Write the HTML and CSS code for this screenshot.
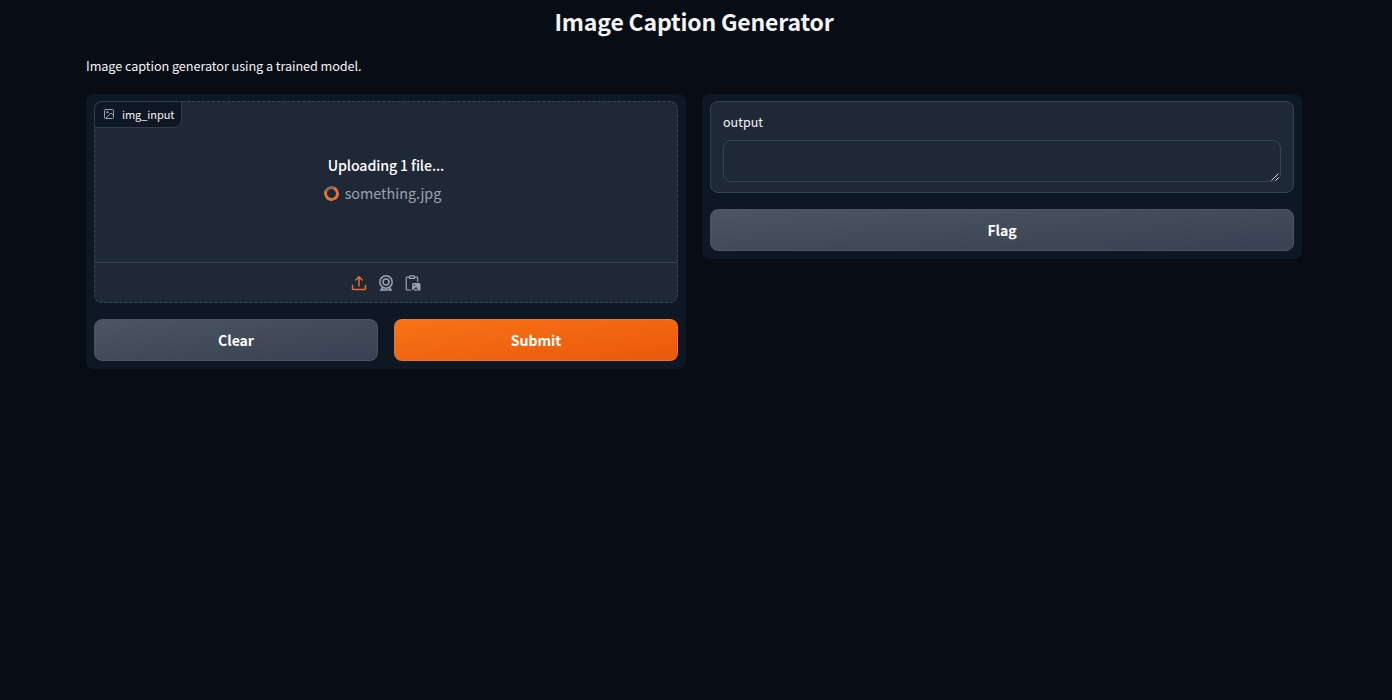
FILE: index.html
```html
<!DOCTYPE html>
<html lang="en">
<head>
<meta charset="utf-8">
<title>Image Caption Generator</title>
<link rel="stylesheet" href="styles.css">
</head>
<body>
<main class="app">
  <h1 class="title">Image Caption Generator</h1>
  <p class="description">Image caption generator using a trained model.</p>
  <div class="columns">
    <section class="panel">
      <div class="image-block">
        <div class="block-label">
          <svg class="label-icon" viewBox="0 0 24 24" fill="none" stroke="currentColor" stroke-width="2" stroke-linecap="round" stroke-linejoin="round"><rect x="3" y="3" width="18" height="18" rx="2"/><circle cx="8.5" cy="8.5" r="1.5"/><path d="M21 15l-5-5L5 21"/></svg>
          <span>img_input</span>
        </div>
        <div class="upload-status">
          <div class="uploading">Uploading 1 file...</div>
          <div class="file"><span class="loader"></span><span class="filename">something.jpg</span></div>
        </div>
        <div class="sources">
          <svg class="source active" viewBox="0 0 16 16" fill="none" stroke="currentColor" stroke-width="1.5" stroke-linecap="round" stroke-linejoin="round"><path d="M1.500 10.500v3.200c0 .5.3.8.8.8h11.400c.5 0 .8-.3.8-.8v-3.200M8 11V1.800M4.800 5 8 1.800 11.200 5"/></svg>
          <svg class="source" viewBox="0 0 16 16" fill="none" stroke="currentColor" stroke-width="1.5" stroke-linecap="round"><circle cx="8" cy="7" r="6.200"/><circle cx="8" cy="7" r="3"/><path d="M4.500 12.800 3 14.900h10l-1.500-2.100"/></svg>
          <svg class="source" viewBox="0 0 16 16" fill="none" stroke="currentColor" stroke-width="1.2" stroke-linejoin="round"><path d="M4.500 2.200H2.100c-.5 0-.9.4-.9.9v11c0 .5.4.9.9.9h4M9.500 2.200h2.200c.5 0 .9.4.9.9v4"/><path d="M4.500 1.600c0-.4.3-.8.8-.8h3.400c.5 0 .8.4.8.8v1.800h-5z"/><path fill="currentColor" stroke="none" fill-rule="evenodd" d="M8.400 8h5.800c.7 0 1.300.6 1.300 1.300v5.200c0 .7-.6 1.300-1.300 1.300h-.6l-2.500-4-3.300 3.600c-.4-.2-.7-.5-.7-.9V9.300C7.100 8.600 7.700 8 8.400 8zM8.600 9.400v1.400H10V9.400zM8.900 15.800l2.200-2.300 1.500 2.300z"/></svg>
        </div>
      </div>
      <div class="buttons">
        <button class="button secondary">Clear</button>
        <button class="button primary">Submit</button>
      </div>
    </section>
    <section class="panel">
      <div class="text-block">
        <label class="field-label" for="output">output</label>
        <div class="field">
          <textarea class="textbox" id="output" rows="1"></textarea>
          <svg class="grip" viewBox="0 0 8 8" stroke="currentColor" stroke-width="1"><path d="M.5 7.500 7.500.5M4.500 7.500l3-3"/></svg>
        </div>
      </div>
      <div class="buttons">
        <button class="button secondary">Flag</button>
      </div>
    </section>
  </div>
</main>
</body>
</html>
```
FILE: styles.css
```css
* { box-sizing: border-box; }
body {
  margin: 0;
  min-height: 700px;
  background: #080c14;
  color: #f3f4f6;
  font-family: "Noto Sans CJK SC", "Open Sans", sans-serif;
}
.app { width: 1216px; margin-left: 86px; }
.title {
  margin: 0;
  padding-top: 4px;
  height: 56px;
  text-align: center;
  font-size: 23px;
  letter-spacing: -0.18px;
  line-height: 34px;
  font-weight: 700;
}
.description {
  margin: 0;
  height: 38px;
  font-size: 12.700px;
  letter-spacing: -0.08px;
  line-height: 20px;
}
.columns { display: flex; align-items: flex-start; gap: 16px; }
.panel {
  flex: 1;
  display: flex;
  flex-direction: column;
  gap: 16px;
  padding: 8px;
  border-radius: 8px;
  background: #0e1724;
}
.image-block {
  position: relative;
  display: flex;
  flex-direction: column;
  height: 202px;
  margin-top: -1px;
  border: 1px dashed #374551;
  border-radius: 8px;
  background: #1f2836;
}
.block-label {
  position: absolute;
  top: -1px;
  left: -1px;
  display: flex;
  align-items: center;
  gap: 7px;
  width: 88px;
  height: 27px;
  padding: 0 0 1px 8px;
  border: 1px solid #303d49;
  border-radius: 8px 0 8px 0;
  background: #0e1724;
  font-size: 11px;
  letter-spacing: -0.06px;
  line-height: 20px;
}
.label-icon { width: 12px; height: 12px; color: #9ca3af; }
.upload-status {
  flex: 1;
  display: flex;
  flex-direction: column;
  align-items: center;
  justify-content: center;
  gap: 4px;
  padding-bottom: 6px;
  font-size: 14.200px;
  line-height: 24px;
}
.uploading { color: #fff; font-weight: 500; letter-spacing: -0.12px; }
.file { display: flex; align-items: center; gap: 6px; margin-right: 7px; color: #9ca3af; }
.filename { font-size: 14.350px; }
.loader {
  width: 15px;
  height: 15px;
  border: 3px solid #e8722e;
  border-top-color: #95635a;
  border-radius: 50%;
  transform: rotate(-20deg);
}
.sources {
  display: flex;
  align-items: center;
  justify-content: center;
  gap: 11px;
  height: 40px;
  border-top: 1px solid #374551;
}
.source { width: 16px; height: 16px; color: #9ca3af; }
.active { color: #ea6a2b; }
.buttons { display: flex; gap: 16px; }
.button {
  flex: 1;
  height: 42px;
  padding: 0 0 1px;
  border: 1px solid #4b5563;
  border-radius: 8px;
  color: #fff;
  font-family: inherit;
  font-size: 14.100px;
  letter-spacing: -0.05px;
  font-weight: 700;
  line-height: 24px;
}
.secondary { background: linear-gradient(to bottom right, #4b5563, #374151); }
.primary {
  border-color: #f07522;
  border-top-color: #d8823f;
  background: linear-gradient(to bottom right, #f97316, #ea580c);
}
.text-block {
  height: 92px;
  margin-top: -1px;
  padding: 10px 12px;
  border: 1px solid #374551;
  border-radius: 8px;
  background: #1f2836;
}
.field-label { display: block; height: 28px; font-size: 12.500px; line-height: 20px; }
.field { position: relative; height: 42px; }
.textbox {
  display: block;
  width: 100%;
  height: 42px;
  padding: 10px;
  border: 1px solid #374551;
  border-radius: 8px;
  background: #1f2836;
  resize: none;
}
.grip { position: absolute; right: 2px; bottom: 1px; width: 8px; height: 8px; color: #d1d5db; }
```
